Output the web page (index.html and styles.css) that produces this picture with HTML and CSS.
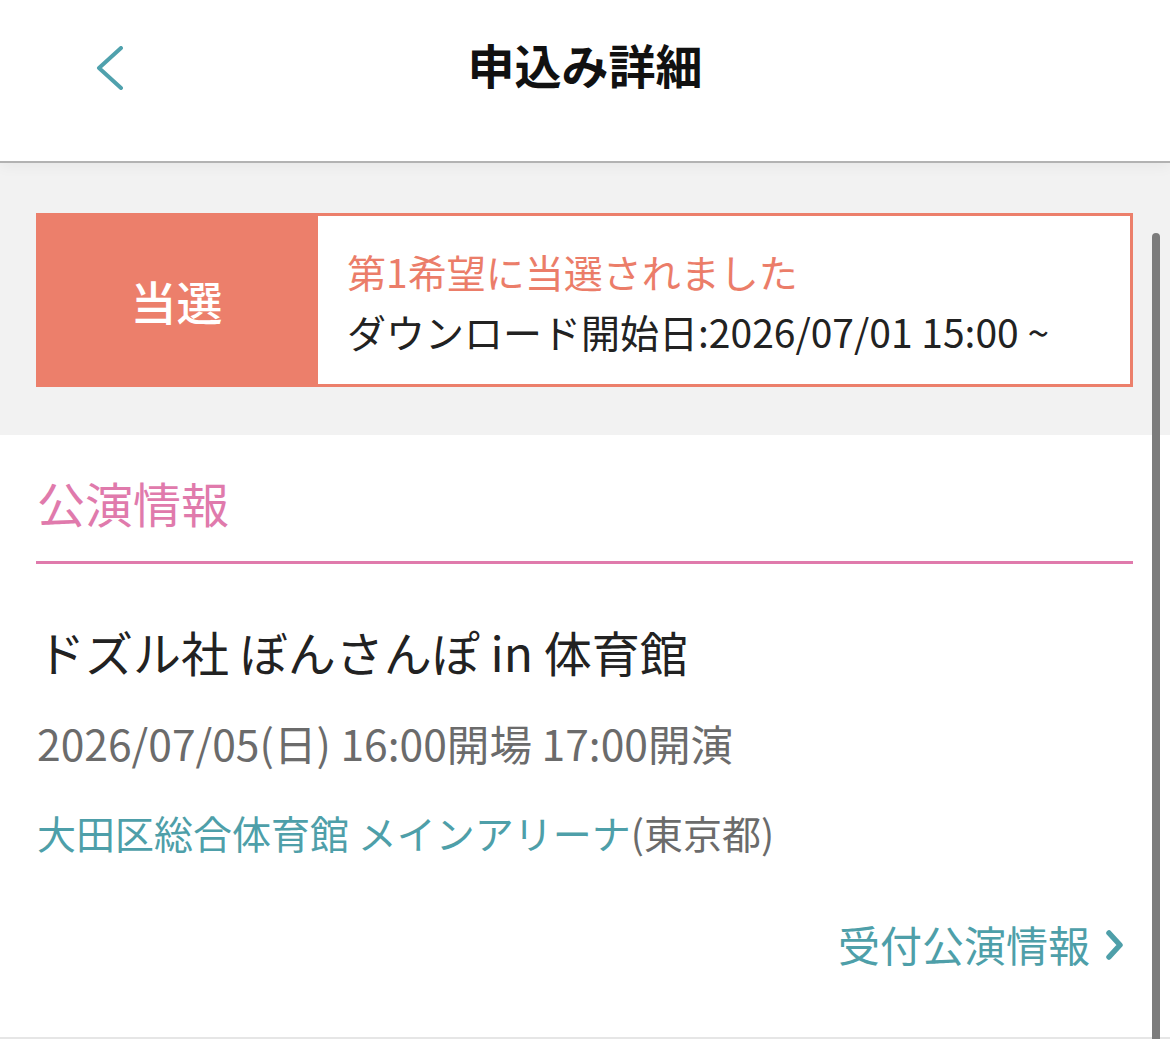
FILE: index.html
```html
<!DOCTYPE html>
<html lang="ja">
<head>
<meta charset="utf-8">
<title>申込み詳細</title>
<link rel="stylesheet" href="styles.css">
</head>
<body>
<div class="app">
  <header class="topbar">
    <a class="back" href="#" aria-label="戻る">
      <svg width="30" height="44" viewBox="0 0 30 44"><polyline points="26,2 4,22 26,42" fill="none" stroke="#4fa1ad" stroke-width="4" stroke-linecap="round" stroke-linejoin="round"/></svg>
    </a>
    <h1 class="title">申込み詳細</h1>
    <span class="spacer"></span>
  </header>

  <section class="status-area">
    <div class="status">
      <div class="status-badge">当選</div>
      <div class="status-body">
        <p class="status-title">第1希望に当選されました</p>
        <p class="status-date">ダウンロード開始日:2026/07/01 15:00 ~</p>
      </div>
    </div>
  </section>

  <section class="info">
    <h2 class="info-heading">公演情報</h2>
    <p class="event-name">ドズル社 ぼんさんぽ in 体育館</p>
    <p class="event-date">2026/07/05(日) 16:00開場 17:00開演</p>
    <p class="event-venue"><span class="venue-name">大田区総合体育館 メインアリーナ</span><span class="venue-pref">(東京都)</span></p>
    <div class="link-row">
      <a class="more-link" href="#">受付公演情報
        <svg width="22" height="30" viewBox="0 0 22 30"><polyline points="5,3 16,15 5,27" fill="none" stroke="#4e9fa9" stroke-width="5.5" stroke-linecap="round" stroke-linejoin="round"/></svg>
      </a>
    </div>
  </section>

  <div class="scrollbar"></div>
</div>
</body>
</html>
```

FILE: styles.css
```css
* { box-sizing: border-box; }
html, body {
  margin: 0;
  padding: 0;
  background: #ffffff;
}
body {
  font-family: "Noto Sans CJK JP", "Noto Sans", sans-serif;
  color: #222222;
  overflow: hidden;
}
p, h1, h2 { margin: 0; }
a { text-decoration: none; }

.app {
  width: 1170px;
  height: 1039px;
  position: relative;
  overflow: hidden;
}

.topbar {
  position: relative;
  z-index: 2;
  height: 163px;
  padding-bottom: 29px;
  display: grid;
  grid-template-columns: 1fr auto 1fr;
  align-items: center;
  background: #ffffff;
  border-bottom: 2px solid #b2b2b2;
  box-shadow: 0 3px 14px rgba(0, 0, 0, 0.05);
}
.back {
  display: flex;
  align-items: center;
  padding-left: 95px;
  margin-top: 4px;
}
.back svg { display: block; }
.title {
  font-size: 47px;
  font-weight: 700;
  line-height: 60px;
  color: #111111;
  letter-spacing: 0;
  margin-top: -4px;
}

.status-area {
  background: #f2f2f2;
  padding: 50px 37px 48px 36px;
}
.status {
  display: flex;
  height: 174px;
  border: 3px solid #ec7f6b;
  background: #ffffff;
}
.status-badge {
  flex: 0 0 279px;
  background: #ec7f6b;
  color: #ffffff;
  font-size: 46px;
  font-weight: 500;
  display: flex;
  align-items: center;
  justify-content: center;
  padding-right: 4px;
}
.status-body {
  flex: 1;
  display: flex;
  flex-direction: column;
  justify-content: center;
  padding-left: 29px;
  padding-top: 2px;
}
.status-title {
  font-size: 39px;
  line-height: 60px;
  color: #eb7d69;
}
.status-date {
  font-size: 39px;
  line-height: 60px;
  color: #222222;
}

.info {
  padding: 37px 37px 0 36px;
  border-bottom: 2px solid #e6e6e6;
  height: 604px;
}
.info-heading {
  font-size: 48px;
  font-weight: 400;
  line-height: 60px;
  color: #e07aac;
  padding-bottom: 29px;
  border-bottom: 3px solid #e07aac;
  padding-left: 1px;
}
.event-name {
  margin-top: 57px;
  font-size: 48px;
  line-height: 60px;
  color: #222222;
  padding-left: 1px;
}
.event-date {
  margin-top: 34px;
  font-size: 42.6px;
  line-height: 56px;
  color: #6b6b6b;
  padding-left: 1px;
}
.event-venue {
  margin-top: 33px;
  font-size: 39px;
  line-height: 56px;
  padding-left: 1px;
}
.venue-name { color: #4e9fa9; }
.venue-pref { color: #6b6b6b; }

.link-row {
  margin-top: 56px;
  display: flex;
  justify-content: flex-end;
  padding-right: 7px;
}
.more-link {
  display: flex;
  align-items: center;
  gap: 14px;
  font-size: 42px;
  line-height: 56px;
  color: #4e9fa9;
}
.more-link svg { display: block; margin-top: 2px; }

.scrollbar {
  position: absolute;
  top: 233px;
  right: 10px;
  width: 8px;
  height: 860px;
  border-radius: 4px;
  background: #7c7c7c;
}
```
